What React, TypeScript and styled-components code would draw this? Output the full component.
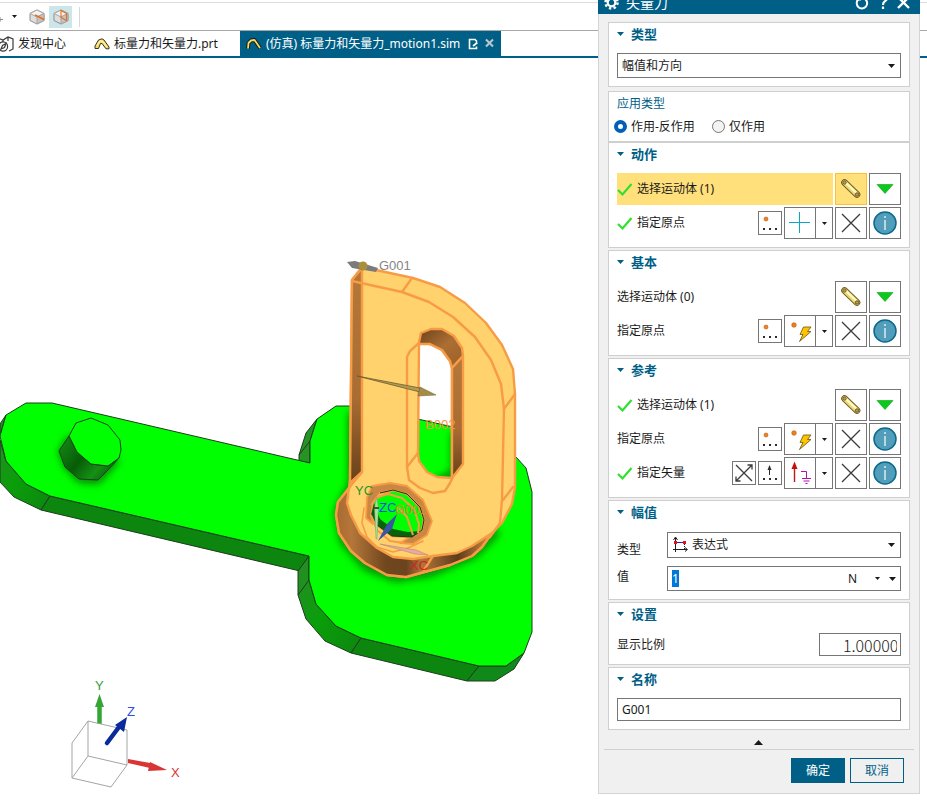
import React, { useEffect, useRef, useState } from "react";
import styled, { createGlobalStyle } from "styled-components";

const teal = "#005f87";
const line = "#cfcfcf";
const frame = "#767676";

const GlobalStyle = createGlobalStyle`
  *, *::before, *::after { box-sizing: border-box; }
  body {
    margin: 0;
    background: #fff;
    color: #1a1a1a;
    font: 12px/16px "Noto Sans", "Noto Sans CJK SC", sans-serif;
  }
  button, input, select { font: inherit; color: inherit; margin: 0; border-radius: 0; }
  svg { display: block; flex: none; }
`;

/* ---------- page ---------- */

const Page = styled.div`
  position: relative;
  min-height: 100vh;
  overflow: hidden;
  display: flex;
  flex-direction: column;
`;

const Toolbar = styled.div`
  height: 29px;
  margin-top: 2px;
  border-top: 1px solid #dcdcdc;
  border-bottom: 1px solid #a8a8a8;
  display: flex;
  align-items: center;
`;

const ToolButton = styled.button<{ $active?: boolean; $width: number }>`
  width: ${(p) => p.$width}px;
  height: 22px;
  padding: 0;
  border: 0;
  display: flex;
  align-items: center;
  justify-content: center;
  background: ${(p) => (p.$active ? "#cce6ea" : "transparent")};
`;

const ToolDivider = styled.span`
  width: 1px;
  height: 20px;
  margin-left: 7px;
  background: #d8d8d8;
`;

const Tabs = styled.div`
  height: 27px;
  border-bottom: 2px solid ${teal};
  display: flex;
`;

const Tab = styled.button<{ $active?: boolean; $pad: string }>`
  border: 0;
  padding: ${(p) => p.$pad};
  height: 25px;
  display: flex;
  align-items: center;
  gap: 4px;
  white-space: nowrap;
  background: ${(p) => (p.$active ? teal : "transparent")};
  color: ${(p) => (p.$active ? "#fff" : "#1a1a1a")};
`;

const TabIcons = styled.span`
  display: flex;
  gap: 6px;
  margin-left: 4px;
`;

const Viewport = styled.main`
  flex: 1;
`;

/* ---------- dialog ---------- */

const Dialog = styled.section`
  position: absolute;
  top: -10px;
  right: 7px;
  width: 322px;
  background: #f0f0f0;
  border: 1px solid #d4d4d4;
`;

const TitleBar = styled.header`
  height: 23px;
  margin: 0 -1px;
  padding: 0 6px;
  display: flex;
  align-items: center;
  background: ${teal};
  color: #fff;
`;

const Title = styled.h1`
  flex: 1;
  margin: 0 0 0 7px;
  font-size: 14px;
  font-weight: 400;
  line-height: 20px;
`;

const TitleButton = styled.button`
  width: 21px;
  height: 20px;
  padding: 0;
  border: 0;
  background: none;
  display: flex;
  align-items: center;
  justify-content: center;
`;

const Groups = styled.form`
  padding: 8px 9px 0;
  display: flex;
  flex-direction: column;
  gap: 2px;
`;

const Group = styled.section<{ $after?: number }>`
  background: #fff;
  border: 1px solid ${line};
  padding: 0 8px 8px;
  margin-bottom: ${(p) => p.$after ?? 0}px;
`;

const GroupToggle = styled.button`
  display: flex;
  align-items: center;
  gap: 7px;
  width: 100%;
  height: 22px;
  margin-bottom: 8px;
  padding: 0;
  border: 0;
  background: none;
  color: ${teal};
  font-size: 13px;
  font-weight: 700;
`;

const KindGroup = styled.fieldset`
  background: #fff;
  border: 1px solid ${line};
  margin: 0 0 -2px;
  padding: 0 8px 2px;
  min-width: 0;
`;

const KindTitle = styled.div`
  color: ${teal};
  height: 22px;
  line-height: 24px;
`;

const Radios = styled.div`
  display: flex;
  gap: 17px;
  height: 25px;
  margin-left: -3px;
  align-items: center;
`;

const RadioLabel = styled.label`
  display: flex;
  align-items: center;
  gap: 4px;
`;

const Radio = styled.input`
  appearance: none;
  width: 13px;
  height: 13px;
  border: 1px solid #777;
  border-radius: 50%;
  background: #f3f3f3;
  &:checked {
    border: 4px solid #005fb8;
    background: #fff;
  }
`;

const Rows = styled.div`
  display: flex;
  flex-direction: column;
  gap: 2px;
`;

const Row = styled.div`
  display: flex;
  align-items: center;
  gap: 2px;
  height: 32px;
`;

const RowLabel = styled.div<{ $active?: boolean }>`
  flex: 1;
  align-self: stretch;
  display: flex;
  align-items: center;
  gap: 4px;
  background: ${(p) => (p.$active ? "#ffe07a" : "transparent")};
`;

const IconButton = styled.button<{ $small?: boolean; $active?: boolean }>`
  width: ${(p) => (p.$small ? 24 : 32)}px;
  height: ${(p) => (p.$small ? 24 : 32)}px;
  padding: 0;
  display: flex;
  align-items: center;
  justify-content: center;
  border: 1px solid ${(p) => (p.$active ? "#ffc02e" : frame)};
  background: ${(p) => (p.$active ? "#ffe07a" : "#fff")};
`;

const Split = styled.div`
  display: flex;
`;

const SplitCaret = styled.button`
  width: 17px;
  height: 32px;
  padding: 0;
  border: 1px solid ${frame};
  border-left: 0;
  background: #fff;
  display: flex;
  align-items: center;
  justify-content: center;
`;

const Stack = styled.div`
  flex: 1;
  display: grid;
  align-items: center;
  & > * { grid-area: 1 / 1; }
`;

const Select = styled.select<{ $tall?: boolean }>`
  appearance: none;
  width: 100%;
  height: ${(p) => (p.$tall ? 26 : 25)}px;
  padding: 0 20px 0 ${(p) => (p.$tall ? 24 : 4)}px;
  border: 1px solid ${frame};
  background: #fff;
`;

const CaretEnd = styled.span`
  justify-self: end;
  margin-right: 6px;
  pointer-events: none;
`;

const LeadIcon = styled.span`
  margin-left: 5px;
  pointer-events: none;
`;

const Fields = styled.div`
  display: grid;
  grid-template-columns: 50px 1fr;
  row-gap: 8px;
`;

const FieldLabel = styled.label<{ $drop?: number }>`
  padding-top: ${(p) => p.$drop ?? 0}px;
`;

const ValueBox = styled.div`
  display: flex;
  align-items: center;
  height: 25px;
  padding: 0 4px;
  border: 1px solid ${frame};
`;

const ValueInput = styled.input`
  flex: 1;
  min-width: 0;
  height: 17px;
  padding: 0;
  border: 0;
  outline: 0;
  background: none;
  &::selection { background: #0078d7; color: #fff; }
`;

const UnitButton = styled.button`
  display: flex;
  align-items: center;
  gap: 18px;
  padding: 0;
  border: 0;
  background: none;
`;

const MenuButton = styled.button`
  display: flex;
  margin-left: 9px;
  padding: 0;
  border: 0;
  background: none;
`;

const ScaleRow = styled.div`
  display: flex;
  align-items: center;
  justify-content: space-between;
`;

const ScaleInput = styled.input`
  width: 82px;
  height: 23px;
  padding: 0 3px 0 23px;
  border: 1px solid ${frame};
  background: #fff;
  font: 300 16px/20px "Noto Sans CJK SC", sans-serif;
`;

const NameInput = styled.input`
  width: 100%;
  height: 23px;
  display: block;
  padding: 0 4px;
  border: 1px solid ${frame};
  background: #fff;
`;

const Collapse = styled.button`
  display: flex;
  justify-content: center;
  align-items: flex-end;
  width: 100%;
  height: 19px;
  padding: 0 2px 4px 0;
  border: 0;
  background: none;
`;

const Footer = styled.footer`
  margin: 0 5px;
  padding: 8px 10px 10px;
  border-top: 1px solid ${line};
  display: flex;
  justify-content: flex-end;
  gap: 5px;
`;

const ActionButton = styled.button<{ $primary?: boolean }>`
  width: 54px;
  height: 25px;
  padding: 0;
  border: 1px solid ${teal};
  background: ${(p) => (p.$primary ? teal : "#f0f0f0")};
  color: ${(p) => (p.$primary ? "#fff" : teal)};
`;

/* ---------- icons ---------- */

const Caret = ({ w = 7, color = "#1a1a1a", up }: { w?: number; color?: string; up?: boolean }) => (
  <svg width={w} height={Math.ceil(w / 2)} viewBox="0 0 8 4" preserveAspectRatio="none">
    <path d={up ? "M0 4L4 0L8 4Z" : "M0 0H8L4 4Z"} fill={color} />
  </svg>
);

const Check = () => (
  <svg width="16" height="16" viewBox="0 0 16 16">
    <path d="M1 9L5.500 13.500L14.500 3" fill="none" stroke="#2fe02f" strokeWidth="2.200" />
  </svg>
);

const Link3D = () => (
  <svg width="22" height="22" viewBox="0 0 22 22">
    <path d="M4.500 4.500L17 16.500" stroke="#6f5b22" strokeWidth="6.600" strokeLinecap="round" />
    <path d="M4.500 4.500L17 16.500" stroke="#ecd876" strokeWidth="4.800" strokeLinecap="round" />
    <path d="M5.500 4.500L17 15.500" stroke="#fffbc4" strokeWidth="2.200" />
    <circle cx="4.500" cy="4.500" r="1.700" fill="#bda04b" stroke="#6b5826" strokeWidth=".9" />
    <circle cx="17" cy="16.500" r="1.700" fill="#bda04b" stroke="#5f4c1c" strokeWidth=".9" />
  </svg>
);

const GreenArrow = () => (
  <svg width="18" height="10" viewBox="0 0 18 10">
    <path d="M1 .5H17L9 9.500Z" fill="#0bc91b" stroke="#0aa316" strokeWidth=".6" />
  </svg>
);

const Cross = () => (
  <svg width="20" height="20" viewBox="0 0 20 20">
    <path d="M1 1L19 19M19 1L1 19" stroke="#3c3c3c" strokeWidth="1.300" />
  </svg>
);

const Info = () => (
  <svg width="24" height="24" viewBox="0 0 24 24">
    <circle cx="12" cy="12" r="11" fill="#529db9" stroke="#0b6a8c" strokeWidth="1.500" />
    <path d="M12 5V7M12 9V19" stroke="#fff" strokeWidth="1.200" />
  </svg>
);

const Dots = () => (
  <>
    <rect x="4" y="16" width="2" height="2" />
    <rect x="10" y="16" width="2" height="2" />
    <rect x="16" y="16" width="2" height="2" />
  </>
);

const PointDots = () => (
  <svg width="22" height="22" viewBox="0 0 22 22" fill="#2b2b2b">
    <circle cx="7" cy="7" r="2" fill="#f08020" stroke="#b95a12" strokeWidth=".6" />
    <Dots />
  </svg>
);

const VectorDots = () => (
  <svg width="22" height="22" viewBox="0 0 22 22" fill="#2b2b2b">
    <path d="M10.500 13V4" stroke="#2b2b2b" />
    <path d="M8.500 8L10.500 3L12.500 8Z" />
    <Dots />
  </svg>
);

const Reverse = () => (
  <svg width="20" height="20" viewBox="0 0 20 20" fill="none" stroke="#3c3c3c" strokeWidth="1.300">
    <path d="M2 18L18 2M2 2L18 18M13.500 2H18V6.500M2 13.500V18H6.500" />
  </svg>
);

const Plus = () => (
  <svg width="22" height="22" viewBox="0 0 22 22">
    <path d="M10.500 0V21M0 10.500H21" stroke="#0aa5c9" />
  </svg>
);

const Bolt = () => (
  <svg width="24" height="24" viewBox="0 0 24 24">
    <circle cx="6" cy="6" r="2.300" fill="#ee7f1d" stroke="#b95a12" strokeWidth=".6" />
    <path d="M15.500 8H23L19.500 12.500H23L11.500 22.500L15 15.500H12Z" fill="#ffc400" stroke="#7d6216" strokeWidth=".9" />
  </svg>
);

const VectorGround = () => (
  <svg width="24" height="24" viewBox="0 0 24 24" fill="none">
    <path d="M6.500 21V4" stroke="#c21717" strokeWidth="1.400" />
    <path d="M3.500 8L6.500 .5L9.500 8Z" fill="#c90d0d" />
    <path d="M13 10.500H18.500V17M14 17.500H23M15.500 20H21.500M17.500 22.500H19.500" stroke="#b012b0" />
  </svg>
);

const Expression = () => (
  <svg width="17" height="17" viewBox="0 0 17 17" fill="none">
    <path d="M3.500 16V2M1 13.500H15M1.500 4L3.500 1L5.500 4M13 11.500L15.500 13.500L13 15.500" stroke="#1f1f1f" />
    <path d="M4 6.500H12" stroke="#1a22c4" />
    <path d="M12.500 8V13" stroke="#1f1f1f" strokeDasharray="1 1" />
    <rect x="2" y="5" width="3" height="3" fill="#e81010" />
    <rect x="11" y="5" width="3" height="3" fill="#e81010" />
  </svg>
);

const Gear = () => (
  <svg width="15" height="15" viewBox="0 0 15 15">
    <circle cx="7.500" cy="7.500" r="6" fill="none" stroke="#fff" strokeWidth="2.500" strokeDasharray="2.400 2.310" />
    <circle cx="7.500" cy="7.500" r="3.800" fill="none" stroke="#fff" strokeWidth="2.200" />
  </svg>
);

const Reset = () => (
  <svg width="14" height="14" viewBox="0 0 14 14" fill="none" stroke="#fff" strokeWidth="2">
    <path d="M3.500 3.300A5.200 5.200 0 1 0 10 3" />
    <path d="M1 3.500H5V0" />
  </svg>
);

const Help = () => (
  <svg width="12" height="16" viewBox="0 0 12 16" fill="none" stroke="#fff" strokeWidth="2.200">
    <path d="M2 4A4 4 0 1 1 8 6.200Q6 7.500 6 10M6 11.500V14" />
  </svg>
);

const Close = () => (
  <svg width="13" height="13" viewBox="0 0 13 13">
    <path d="M1 1L12 12M12 1L1 12" stroke="#fff" strokeWidth="2.400" />
  </svg>
);

const CubeIcon = ({ corner }: { corner?: boolean }) => (
  <svg width="16" height="16" viewBox="0 0 16 16" strokeLinejoin="round">
    <path d="M8 1L15 4.500V11.500L8 15L1 11.500V4.500Z" fill="#dedede" stroke="#8f8f8f" />
    <path d="M1 4.500L8 8L15 4.500L8 1Z" fill="#f3f3f3" stroke="#a5a5a5" />
    <path d="M8 8V15L15 11.500V4.500Z" fill="#c4c4c4" stroke="#a5a5a5" />
    <path d={corner ? "M8 1.500V8.500L13.500 11.500V4.500Z" : "M6 6L15 10.500"} fill="none" stroke="#e8701a" strokeWidth={corner ? 1.1 : 1.6} />
  </svg>
);

const PartIcon = () => (
  <svg width="16" height="12" viewBox="0 0 16 12" fill="none" strokeLinejoin="round">
    <path d="M1 10.500V8L4.500 2L8 .8L10 2L15 9V10.800H12L8 5.500H6.500L4.500 10.500Z" fill="#f3dc6b" stroke="#3c3413" />
    <path d="M3 7.500L6 3H8.500L13 9" stroke="#fff9c8" />
  </svg>
);

const SimIcon = () => (
  <svg width="16" height="12" viewBox="0 0 16 12" fill="none" strokeLinejoin="round">
    <path d="M2 10.500L2.500 5L5 2.500L8.500 2L14 10" stroke="#171d14" strokeWidth="3.800" />
    <path d="M2 10.500L2.500 5L5 2.500L8.500 2L14 10" stroke="#f3dc6b" strokeWidth="1.800" />
  </svg>
);

const DiscoverIcon = () => (
  <svg width="14" height="16" viewBox="2 0 14 16" fill="none" stroke="#3a3a3a" strokeWidth="1.200">
    <path d="M0 2L5 4L10 1L15 3V13L11 15M5 4V6M10 1V5" />
    <circle cx="5" cy="10.500" r="4.600" />
    <path d="M3 13L4.500 9.500L8 7.500L6.500 11.500Z" />
  </svg>
);

const DocIcon = () => (
  <svg width="11" height="12" viewBox="0 0 11 12" fill="none" stroke="#fff" strokeWidth="1.600">
    <path d="M6.500 1.500H1.500V10.500H8.500V8.500M6.500 1L8.500 3V5M5 8L9.500 4.500" />
  </svg>
);

const TabClose = () => (
  <svg width="9" height="10" viewBox="0 0 9 10">
    <path d="M1 1.500L8 8.500M8 1.500L1 8.500" stroke="#b9c7cf" strokeWidth="2.100" />
  </svg>
);

/* ---------- 3D model ---------- */

const SceneSvg = styled.svg`
  font-family: "Liberation Sans", Arial, sans-serif;
  font-size: 13px;
`;

const Model = () => (
  <SceneSvg width="598" height="748" viewBox="0 58 598 748" role="img" aria-label="model">
    <defs>
      <linearGradient id="wall" x1="0" x2="0" y1="0" y2="1">
        <stop offset="0" stopColor="#b5783a" />
        <stop offset=".6" stopColor="#a96d33" />
        <stop offset="1" stopColor="#67401a" />
      </linearGradient>
      <linearGradient id="rim" x1="0" x2="1" y1="0" y2="0">
        <stop offset="0" stopColor="#a96a30" />
        <stop offset=".1" stopColor="#b5763a" />
        <stop offset=".32" stopColor="#70471e" />
        <stop offset=".45" stopColor="#6b441e" />
        <stop offset=".55" stopColor="#b2753a" />
        <stop offset=".78" stopColor="#5e3c1b" />
        <stop offset="1" stopColor="#d58e42" />
      </linearGradient>
      <linearGradient id="arch" x1="0" x2="1" y1="0" y2="1">
        <stop offset="0" stopColor="#6c431c" />
        <stop offset=".5" stopColor="#ab6e33" />
        <stop offset="1" stopColor="#9c6028" />
      </linearGradient>
      <linearGradient id="pin" x1="0" x2="1" y1="0" y2=".6">
        <stop offset="0" stopColor="#159015" />
        <stop offset=".5" stopColor="#075c07" />
        <stop offset=".8" stopColor="#159015" />
        <stop offset="1" stopColor="#0b6a0b" />
      </linearGradient>
      <linearGradient id="corner" x1="0" x2="1" y1="0" y2="1">
        <stop offset="0" stopColor="#2a8a2a" />
        <stop offset=".5" stopColor="#0a9e0a" />
        <stop offset="1" stopColor="#0d860f" />
      </linearGradient>
      <filter id="soft" x="-20%" y="-20%" width="140%" height="140%">
        <feGaussianBlur stdDeviation="4" />
      </filter>
      <clipPath id="plate">
        <path d="M26 403H52L310 463V441L317 419L336 406H360L453 427L516 457L526 468L532 492V632L524 653L506 666H479L361 638L336 626L316 604L309 580V556L50 496L26 484L6 461L0 436L6 415Z" />
      </clipPath>
    </defs>

    <g stroke="#1d3d1d" strokeWidth="1" strokeLinejoin="round">
      <path d="M0 424L6 415L0 436ZM0 440L6 461L26 484L50 496L41 510L14 497L0 482Z" fill="url(#corner)" />
      <path d="M50 496L309 556L300 571L41 510Z" fill="#0d860f" />
      <path d="M309 556L298 571V595L306 619L325 641L351 653L361 638L336 626L316 604L309 580Z" fill="url(#corner)" />
      <path d="M361 638L479 666L467 681L351 653Z" fill="#0d860f" />
      <path d="M479 666H506L524 653L514 669L495 681H467Z" fill="#11891a" />
      <path d="M317 419L306 433L299 455V461L310 463V441Z" fill="#279327" />
      <path d="M310 441L299 455M309 580L298 595" />
      <path
        d="M26 403H52L310 463V441L317 419L336 406H360L453 427L516 457L526 468L532 492V632L524 653L506 666H479L361 638L336 626L316 604L309 580V556L50 496L26 484L6 461L0 436L6 415Z"
        fill="#00ff00"
      />
    </g>

    <g clipPath="url(#plate)">
      <path d="M69 436L59 451L65 467L79 482L99 483L119 460" fill="#096f09" filter="url(#soft)" />
      <path
        d="M354 412V484L340 512L345 540L367 565L396 576L430 571L473 553L496 530"
        fill="none"
        stroke="#087708"
        strokeWidth="10"
        filter="url(#soft)"
      />
      <path d="M456 432V474L438 482" fill="none" stroke="#087708" strokeWidth="8" filter="url(#soft)" />
    </g>
    <path d="M69 436L59 451L65 467L79 479L98 480L108 470L119 458L108 466L91 464L77 452Z" fill="url(#pin)" stroke="#1d3d1d" />
    <path d="M91 418L108 425L120 440L121 450L119 458L108 466L91 464L77 452L69 436L76 423Z" fill="#00ff00" stroke="#1d3d1d" />

    <g stroke="#f79c45" strokeWidth="2.400" strokeLinejoin="round" strokeLinecap="round">
      <path
        fillRule="evenodd"
        fill="#ffd26d"
        d="M352 280L362 267L413 278L440 287L465 303L486 323L502 345L513 369L515 394L515 487L512 504L502 523L492 533L482 547L472 556L450 565L428 571L406 577L387 575L365 563L351 551L339 533L336 515L338 502L349 488L350 480Z
           M419 343L430 344L442 350L450 361L452 368V478L437 477L427 472L419 461L418 453Z
           M393 490L407 494L420 507L424 520L422 530L412 537L392 536L377 525L371 515L373 500Z"
      />
      <path d="M352 280L362 268V472L350 483Z" fill="url(#wall)" />
      <path
        fill="url(#rim)"
        d="M349 488L338 502L336 515L339 533L351 551L365 563L387 575L406 577L428 571L450 565L472 556L482 547L492 533L472 546L457 553L433 556L413 559L393 557L377 548L360 533L351 515L347 503Z"
      />
      <path d="M433 556L424 570" />
      <path d="M352 281L402 292L429 302L453 317L475 337L491 360L501 384L504 409L502 500L500 523L490 537" fill="none" />
      <path d="M402 292L412 278M504 409L515 394M503 500L513 487M362 472L349 488" fill="none" />
      <path d="M419 342L421 333L431 329H442L454 336L462 348L463 356L452 368L450 361L442 350L430 344H419Z" fill="url(#arch)" />
      <path d="M463 356V464L452 478V368Z" fill="url(#wall)" />
      <path d="M419 343L410 351L407 357V467L409 480L420 488L433 493L445 491L450 483L453 477M407 467L418 453" fill="none" />
      <path
        fill="#c98743"
        fillRule="evenodd"
        strokeWidth="1.800"
        d="M372 486L390 483L407 486L423 500L432 521L427 535L413 544L400 543L410 537L422 530L424 520L420 507L407 494L393 490L380 493L373 502L371 515L373 524L366 518L367 497Z"
      />
      <path d="M364 508L362 523L367 537L377 547L393 552L408 548L423 541" fill="none" strokeWidth="1.600" />
    </g>
    <path d="M371 515L377 525L392 536L412 537L420 531L408 532L393 529L380 519L374 503Z" fill="#07620b" />
    <path d="M380 493L393 490L407 494L420 507L424 520L422 530L412 537L392 536L377 525" fill="none" stroke="#123d12" />
    <path
      d="M371 505L378 497L388 494L402 498L414 509L419 524L418 533M399 508L407 517L413 535M371 515L377 530L390 541L404 543"
      fill="none"
      stroke="#f79c45"
      strokeWidth="2"
      strokeLinejoin="round"
    />

    <g>
      <path d="M347 262L355 261L378 268L376 272L352 268Z" fill="#7b7b7b" />
      <circle cx="363" cy="266" r="4.500" fill="#a98e3f" />
      <text x="379" y="270" fill="#858585">G001</text>
      <path d="M357 376L420 388V392Z" fill="#b39b55" stroke="#6e5c2b" strokeWidth=".8" />
      <path d="M420 387L436 395L418 396Z" fill="#a58d47" stroke="#6e5c2b" strokeWidth=".5" />
      <text x="425" y="429" fill="#f0953c">B002</text>
      <text x="355" y="495" fill="#2c9427">YC</text>
      <text x="395" y="514" fill="#d98a2b">G001</text>
      <text x="410" y="570" fill="#cf2525">XC</text>
      <path d="M376.500 497L378.500 508L377 539H376L374.500 508Z" fill="#a9dfa0" stroke="#6fa768" strokeWidth=".5" />
      <path d="M374 508H379" stroke="#335c33" strokeWidth="2" />
      <path d="M378 541L387 524L397 514L392 529Z" fill="#3956a4" />
      <path d="M380 544L416 550L428 555L415 554Z" fill="#e9aaa2" stroke="#b7746e" strokeWidth=".5" />
      <text x="379" y="512" fill="#0a50ff">ZC</text>
    </g>

    <g>
      <path d="M99.500 724V705" stroke="#35a535" strokeWidth="4.500" />
      <path d="M99.500 694L104 707H95Z" fill="#35a535" />
      <path d="M88 721L72 743V778L111 787L127 765V730L88 721V756L72 778M88 756L127 765" fill="none" stroke="#a5a5a5" />
      <path d="M107 743L119 727" stroke="#0b2a9c" strokeWidth="4.500" strokeLinecap="round" />
      <path d="M127 717L115 725L124 732Z" fill="#0b2a9c" />
      <path d="M128 759L150 763V768L128 763Z" fill="#d93535" />
      <path d="M150 762L167 770L148 771Z" fill="#d93535" />
      <text x="95" y="690" fill="#3a9a3a">Y</text>
      <text x="127" y="716" fill="#2a4fe0">Z</text>
      <text x="171" y="777" fill="#d93535">X</text>
    </g>
  </SceneSvg>
);

/* ---------- dialog parts ---------- */

const Heading = ({ children }: { children: React.ReactNode }) => (
  <GroupToggle type="button">
    <Caret color={teal} />
    {children}
  </GroupToggle>
);

const BodyRow = ({ text, checked, active }: { text: string; checked?: boolean; active?: boolean }) => (
  <Row>
    <RowLabel $active={active}>
      {checked && <Check />}
      {text}
    </RowLabel>
    <IconButton type="button" $active={active} aria-label={text}><Link3D /></IconButton>
    <IconButton type="button" aria-label="更多"><GreenArrow /></IconButton>
  </Row>
);

const PointRow = ({ text, checked, icon, vector }: { text: string; checked?: boolean; icon: React.ReactNode; vector?: boolean }) => (
  <Row>
    <RowLabel>
      {checked && <Check />}
      {text}
    </RowLabel>
    {vector && <IconButton type="button" $small aria-label="反向"><Reverse /></IconButton>}
    <IconButton type="button" $small aria-label="构造器">{vector ? <VectorDots /> : <PointDots />}</IconButton>
    <Split>
      <IconButton type="button" aria-label={text}>{icon}</IconButton>
      <SplitCaret type="button" aria-label="选项"><Caret w={5} /></SplitCaret>
    </Split>
    <IconButton type="button" aria-label="清除"><Cross /></IconButton>
    <IconButton type="button" aria-label="信息"><Info /></IconButton>
  </Row>
);

const VectorForceDialog = () => {
  const valueRef = useRef<HTMLInputElement>(null);
  const [kind, setKind] = useState("pair");
  useEffect(() => {
    valueRef.current?.focus();
    valueRef.current?.select();
  }, []);

  return (
    <Dialog role="dialog" aria-labelledby="dialog-title">
      <TitleBar>
        <Gear />
        <Title id="dialog-title">矢量力</Title>
        <TitleButton aria-label="重置"><Reset /></TitleButton>
        <TitleButton aria-label="帮助"><Help /></TitleButton>
        <TitleButton aria-label="关闭"><Close /></TitleButton>
      </TitleBar>
      <Groups onSubmit={(e) => e.preventDefault()}>
        <Group $after={2}>
          <Heading>类型</Heading>
          <Stack>
            <Select aria-label="类型"><option>幅值和方向</option></Select>
            <CaretEnd><Caret /></CaretEnd>
          </Stack>
        </Group>

        <KindGroup aria-labelledby="kind-title">
          <KindTitle id="kind-title">应用类型</KindTitle>
          <Radios>
            <RadioLabel>
              <Radio type="radio" name="kind" checked={kind === "pair"} onChange={() => setKind("pair")} />
              作用-反作用
            </RadioLabel>
            <RadioLabel>
              <Radio type="radio" name="kind" checked={kind === "single"} onChange={() => setKind("single")} />
              仅作用
            </RadioLabel>
          </Radios>
        </KindGroup>

        <Group>
          <Heading>动作</Heading>
          <Rows>
            <BodyRow text="选择运动体 (1)" checked active />
            <PointRow text="指定原点" checked icon={<Plus />} />
          </Rows>
        </Group>

        <Group>
          <Heading>基本</Heading>
          <Rows>
            <BodyRow text="选择运动体 (0)" />
            <PointRow text="指定原点" icon={<Bolt />} />
          </Rows>
        </Group>

        <Group>
          <Heading>参考</Heading>
          <Rows>
            <BodyRow text="选择运动体 (1)" checked />
            <PointRow text="指定原点" icon={<Bolt />} />
            <PointRow text="指定矢量" checked vector icon={<VectorGround />} />
          </Rows>
        </Group>

        <Group>
          <Heading>幅值</Heading>
          <Fields>
            <FieldLabel htmlFor="force-type" $drop={11}>类型</FieldLabel>
            <Stack>
              <Select id="force-type" $tall><option>表达式</option></Select>
              <LeadIcon><Expression /></LeadIcon>
              <CaretEnd><Caret /></CaretEnd>
            </Stack>
            <FieldLabel htmlFor="force-value" $drop={3}>值</FieldLabel>
            <ValueBox>
              <ValueInput id="force-value" ref={valueRef} defaultValue="1" />
              <UnitButton type="button">N<Caret w={5} /></UnitButton>
              <MenuButton type="button" aria-label="选项"><Caret /></MenuButton>
            </ValueBox>
          </Fields>
        </Group>

        <Group>
          <Heading>设置</Heading>
          <ScaleRow>
            <label htmlFor="scale">显示比例</label>
            <ScaleInput id="scale" defaultValue="1.000000" />
          </ScaleRow>
        </Group>

        <Group>
          <Heading>名称</Heading>
          <NameInput aria-label="名称" defaultValue="G001" />
        </Group>
      </Groups>
      <Collapse aria-label="收起"><Caret w={9} up /></Collapse>
      <Footer>
        <ActionButton $primary>确定</ActionButton>
        <ActionButton>取消</ActionButton>
      </Footer>
    </Dialog>
  );
};

export default function App() {
  return (
    <Page>
      <GlobalStyle />
      <Toolbar>
        <ToolButton $width={24} aria-label="添加">
          <svg width="24" height="12" viewBox="0 0 24 12">
            <path d="M0 8.500H3M0 6V11" stroke="#8a8a8a" />
            <path d="M12 4H17L14.500 7Z" fill="#1a1a1a" />
          </svg>
        </ToolButton>
        <ToolButton $width={25} aria-label="视图"><CubeIcon /></ToolButton>
        <ToolButton $width={23} $active aria-label="截面"><CubeIcon corner /></ToolButton>
        <ToolDivider />
      </Toolbar>
      <Tabs>
        <Tab $pad="0"><DiscoverIcon />发现中心</Tab>
        <Tab $pad="0 22px 0 28px"><PartIcon />标量力和矢量力.prt</Tab>
        <Tab $pad="0 7px 0 6px" $active>
          <SimIcon />
          (仿真) 标量力和矢量力_motion1.sim
          <TabIcons><DocIcon /><TabClose /></TabIcons>
        </Tab>
      </Tabs>
      <Viewport><Model /></Viewport>
      <VectorForceDialog />
    </Page>
  );
}
